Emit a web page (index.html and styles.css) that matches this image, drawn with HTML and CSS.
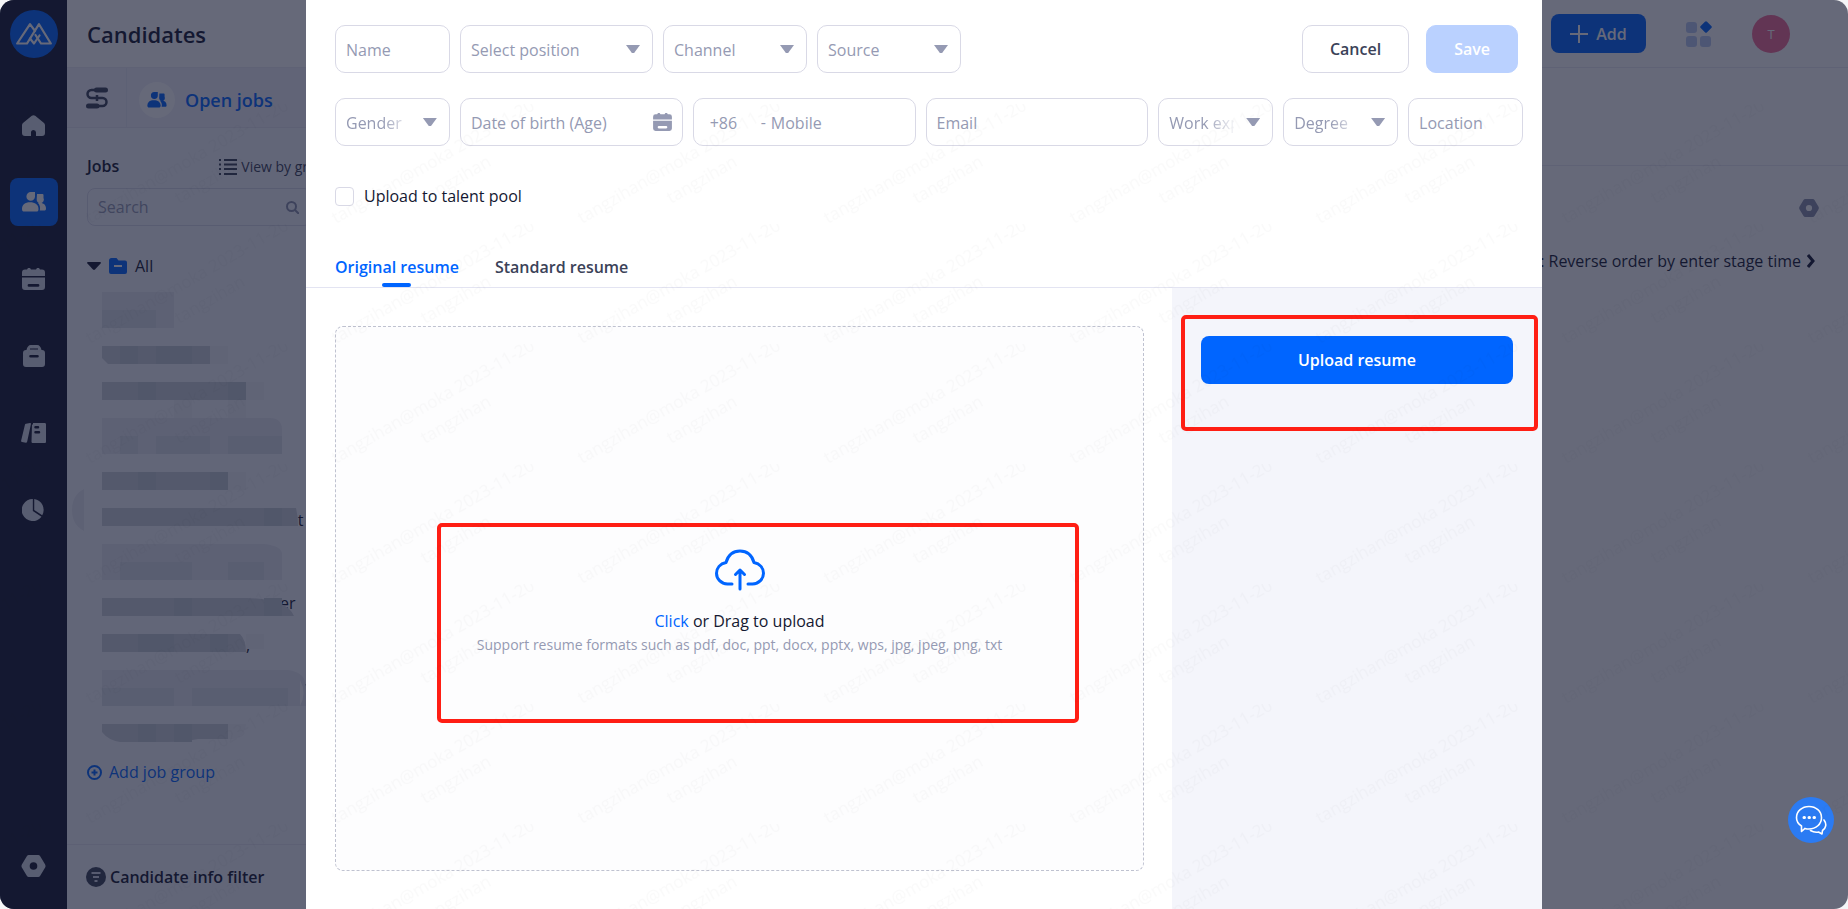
FILE: index.html
```html
<!DOCTYPE html>
<html lang="en">
<head>
    <meta charset="UTF-8">
    <meta name="viewport" content="width=device-width, initial-scale=1.0">
    <title>Candidates - Upload resume</title>
    <link rel="stylesheet" href="styles.css">
</head>
<body>
    <!-- Shared icons -->
    <svg class="sprite" aria-hidden="true">
        <symbol id="icon-people" viewBox="0 0 24 20">
            <path d="M9 0h4v4.500a4.300 4.300 0 1 1-8.600 0A4.500 4.500 0 0 1 9 0z"/>
            <path d="M15 2h5.500a1 1 0 0 1 1 1v3a3.600 3.600 0 1 1-6.800 1.200z"/>
            <path d="M0 17c0-4.500 3-6.800 8-6.800s8.500 2.300 8.500 6.800c0 2-.8 2.500-2 2.500H2c-1.200 0-2-.5-2-2.500z"/>
            <path d="M15.800 10.800c5.400-.6 8.200 1.900 8.200 5.700 0 1.400-.6 2-1.700 2h-4.500c.8-3.200-.1-5.700-2-7.700z"/>
        </symbol>
        <symbol id="icon-calendar" viewBox="0 0 23 22">
            <path d="M3 1.500h2L6 0h2l1 1.500h5L15 0h2l1 1.500h2a3 3 0 0 1 3 3V8H0V4.500a3 3 0 0 1 3-3z"/>
            <path fill-rule="evenodd" d="M0 9.500h23V19a3 3 0 0 1-3 3H3a3 3 0 0 1-3-3zM7 16a1.300 1.300 0 0 0 0 2.800h9a1.300 1.300 0 0 0 0-2.800z"/>
        </symbol>
        <symbol id="icon-nut" viewBox="0 0 24 22">
            <path fill-rule="evenodd" d="M7.500 0h9a2.500 2.500 0 0 1 2.200 1.200l4.800 8a3.500 3.500 0 0 1 0 3.600l-4.800 8a2.500 2.500 0 0 1-2.200 1.200h-9a2.500 2.500 0 0 1-2.200-1.200l-4.800-8a3.500 3.500 0 0 1 0-3.600l4.800-8A2.500 2.500 0 0 1 7.500 0zM12 7.200a3.800 3.800 0 1 0 0 7.600 3.800 3.800 0 0 0 0-7.600z"/>
        </symbol>
    </svg>

    <div class="app">
        <!-- Dark icon rail -->
        <nav class="rail" aria-label="Main">
            <a class="logo" href="#" aria-label="Home page">
                <svg width="36" height="22" viewBox="0 0 36 22" fill="none" stroke="#fff" stroke-width="2.200" stroke-linejoin="round" stroke-linecap="round">
                    <path d="M19 8L14 1.200 1.200 20.500H11L23 1.200 34.800 20.500H25L19.500 12"/>
                    <path d="M14 15.500l4 5 5.500-8"/>
                </svg>
            </a>
            <div class="rail-links">
                <a href="#" aria-label="Dashboard">
                    <svg width="23" height="21" viewBox="0 0 23 21"><path d="M9.800.8a2.800 2.800 0 0 1 3.400 0l8.500 7A3 3 0 0 1 23 10v8a3 3 0 0 1-3 3h-6v-3.500a2.500 2.500 0 0 0-5 0V21H3a3 3 0 0 1-3-3v-8a3 3 0 0 1 1.300-2.200z"/></svg>
                </a>
                <a href="#" class="active" aria-label="Candidates"><svg width="24" height="20"><use href="#icon-people"/></svg></a>
                <a href="#" aria-label="Schedule"><svg width="23" height="22"><use href="#icon-calendar"/></svg></a>
                <a href="#" aria-label="Jobs">
                    <svg width="22" height="22" viewBox="0 0 22 22"><path fill-rule="evenodd" d="M3.500 5C4 2 5.500 0 8 0h6c2.500 0 4 2 4.500 5H19a3 3 0 0 1 3 3v11a3 3 0 0 1-3 3H3a3 3 0 0 1-3-3V8a3 3 0 0 1 3-3zM7 3.500v1h8v-1zM7.500 10a1.200 1.200 0 0 0 0 2.600h7a1.200 1.200 0 0 0 0-2.600z"/></svg>
                </a>
                <a href="#" aria-label="Library">
                    <svg width="25" height="20" viewBox="0 0 25 20"><path d="M5 .8L9 0c.8 0 1 .5.900 1.200L6.200 18.500c-.2.800-.6 1.200-1.300 1.200L1 19c-.8-.2-1-.6-.9-1.300L4 1.600C4.100 1.100 4.400.9 5 .8z"/><path fill-rule="evenodd" d="M11 1.500h1V0h11.500c1 0 1.500.5 1.500 1.500v17c0 1-.5 1.500-1.500 1.500H12c-1 0-1.500-.5-1.500-1.500zM14.500 3a1.200 1.200 0 0 0 0 2.500h2.500a1.200 1.200 0 0 0 0-2.500zm0 5a1.200 1.200 0 0 0 0 2.500h3.500a1.200 1.200 0 0 0 0-2.500z"/></svg>
                </a>
                <a href="#" aria-label="Reports">
                    <svg width="23" height="23" viewBox="0 0 24 24"><path d="M11.300 0v12.500l9 6A11.500 11.500 0 1 1 11.300 0z"/><path d="M12.800 0a11.500 11.500 0 0 1 8.300 17l-8.300-5.400z"/></svg>
                </a>
            </div>
            <a href="#" class="rail-settings" aria-label="Settings"><svg width="25" height="22"><use href="#icon-nut"/></svg></a>
        </nav>

        <div class="page">
            <header class="topbar">
                <h1>Candidates</h1>
                <div class="topbar-actions">
                    <button class="add-btn" type="button">
                        <svg width="18" height="18" viewBox="0 0 18 18" stroke="#fff" stroke-width="2"><path d="M9 0v18M0 9h18"/></svg>
                        Add
                    </button>
                    <button class="icon-btn" type="button" aria-label="Apps">
                        <svg width="26" height="26" viewBox="0 0 26 26"><g fill="#b8c8ef"><rect y="1" width="11" height="11" rx="3"/><rect y="15" width="11" height="11" rx="3"/><rect x="14" y="15" width="11" height="11" rx="3"/></g><rect x="15.500" y="1.500" width="9" height="9" rx="1.500" fill="#0065ff" transform="rotate(45 20 6)"/></svg>
                    </button>
                    <button class="avatar" type="button">T</button>
                </div>
            </header>

            <div class="columns">
                <aside class="sidebar">
                    <div class="scope">
                        <button class="scope-switch" type="button" aria-label="Switch view">
                            <svg width="22" height="22" viewBox="0 0 22 22" fill="none" stroke="#3b4258" stroke-width="2.500"><path d="M12 3H5.500a4 4 0 0 0 0 8h11a4 4 0 0 1 0 8H11"/><path stroke-width="5" stroke-linecap="round" d="M10.500 3h9M2.500 19H11"/><path d="M11 8v6"/></svg>
                        </button>
                        <a class="scope-link" href="#">
                            <span class="scope-icon"><svg width="20" height="16"><use href="#icon-people"/></svg></span>
                            Open jobs
                        </a>
                    </div>
                    <div class="jobs">
                        <div class="jobs-head">
                            <h2>Jobs</h2>
                            <a href="#">
                                <svg width="18" height="16" viewBox="0 0 18 16" stroke="#3b4258" stroke-width="2"><path d="M5 1h13M5 5.500h13M5 10h13M5 15h13M0 1h2M0 5.500h2M0 10h2M0 15h2"/></svg>
                                View by group
                            </a>
                        </div>
                        <div class="search">
                            <input type="text" placeholder="Search" aria-label="Search jobs">
                            <svg width="13" height="13" viewBox="0 0 13 13" fill="none" stroke="#8b91ab" stroke-width="2"><circle cx="5.500" cy="5.500" r="4.500"/><path d="M9 9l4 4"/></svg>
                        </div>
                        <div class="tree-root">
                            <svg width="14" height="8" viewBox="0 0 14 8"><path d="M1 0h12c1 0 1.200.8.600 1.500L8 7.500c-.6.600-1.400.6-2 0L.4 1.500C-.2.800 0 0 1 0z" fill="#141831"/></svg>
                            <svg width="18" height="16" viewBox="0 0 18 16"><path fill="#0065ff" d="M2.500 0h5l2 2.500H16a2 2 0 0 1 2 2V14a2 2 0 0 1-2 2H2a2 2 0 0 1-2-2V2.500A2.500 2.500 0 0 1 2.500 0z"/><path d="M5 8h8" stroke="#fff" stroke-width="2"/></svg>
                            <span>All</span>
                        </div>
                        <!-- Masked job names -->
                        <svg class="masked" width="250" height="460" viewBox="72 285 250 460" aria-hidden="true">
                            <g class="mask-text"><text x="288" y="525">nt</text><text x="280" y="608">er</text><text x="246" y="650">,</text><text x="302" y="692">e</text></g>
                            <path class="m1" d="M102 291h72v36h-72zM102 417h168q12 0 12 12v24H102zM102 543h162q18 2 18 10v26H102zM102 669h186q18 2 18 18v18H102zM84 488v42q-12-6-12-21t12-21z"/>
                            <path class="m2" d="M102 309h54v18h-54zM120 435h18v18h-18zM156 435h54v18h-54zM228 435h54v18h-54zM120 561h72v18h-72zM228 561h36v18h-36zM102 687h72v18h-72zM192 687h96v18h-96z"/>
                            <path class="m1" d="M210 345h18v18h-18zM246 381h18v18h-18zM228 471h18v18h-18zM246 633h18v15h-18zM228 723h18q-2 14-14 15h-4zM174 399h18v18h-18zM228 399h18v18h-18z" opacity=".5"/>
                            <path class="m3" d="M102 345h108v18h-102l-6-6zM102 381h144v18H102zM102 471h126v18H102zM102 507h194q2 8 2 18H102zM102 597h145q40 1 47 18H102zM102 633h138q6 6 6 18H102zM102 723h126v15h-30q-14 3-30 3h-48q-12-2-18-10z"/>
                            <path class="m4" d="M120 345h18v18h-18zM156 345h36v18h-36zM138 381h18v18h-18zM228 381h18v18h-18zM138 471h18v18h-18zM210 471h18v18h-18zM174 597h18v18h-18zM264 597h18v18h-18zM138 633h36v18h-36zM210 633h18v18h-18zM138 723h18v18h-18zM174 723h18v18h-18zM264 507h18v18h-18z"/>
                            <path fill="#fff" d="M300 679q7 13 0 26z"/>
                        </svg>
                        <a class="add-group" href="#">
                            <svg width="15" height="15" viewBox="0 0 15 15" fill="none" stroke="#0065ff" stroke-width="2"><circle cx="7.500" cy="7.500" r="6.500"/><path d="M7.500 4.500v6M4.500 7.500h6"/></svg>
                            Add job group
                        </a>
                    </div>
                    <a class="info-filter" href="#">
                        <svg width="20" height="20" viewBox="0 0 20 20"><circle cx="10" cy="10" r="10" fill="#3b4258"/><path d="M5.500 6h9M7 10h6M8.500 14h3" stroke="#d5d8e4" stroke-width="2"/></svg>
                        Candidate info filter
                    </a>
                </aside>
                <main class="content">
                    <div class="content-head"></div>
                    <div class="content-tools">
                        <button class="icon-btn" type="button" aria-label="List settings"><svg class="list-settings" width="20" height="18"><use href="#icon-nut"/></svg></button>
                        <a class="sort" href="#">Sort: Reverse order by enter stage time
                            <svg width="8" height="14" viewBox="0 0 8 14" fill="none" stroke="#141831" stroke-width="3"><path d="M1 1l5 6-5 6"/></svg>
                        </a>
                    </div>
                </main>
            </div>
        </div>

        <div class="backdrop"></div>

        <!-- Upload drawer -->
        <form class="drawer" onsubmit="return false">
            <div class="drawer-head">
                <div class="head-row">
                    <div class="field name"><input type="text" placeholder="Name" aria-label="Name"></div>
                    <div class="field select position"><select aria-label="Position"><option>Select position</option></select></div>
                    <div class="field select channel"><select aria-label="Channel"><option>Channel</option></select></div>
                    <div class="field select channel"><select aria-label="Source"><option>Source</option></select></div>
                    <div class="head-buttons">
                        <button class="btn" type="button">Cancel</button>
                        <button class="btn btn-save" type="submit" disabled>Save</button>
                    </div>
                </div>
                <div class="info-row">
                    <div class="field select fade"><select aria-label="Gender"><option>Gender</option></select></div>
                    <div class="field">
                        <input type="text" placeholder="Date of birth (Age)" aria-label="Date of birth (Age)">
                        <svg class="date-icon" width="19" height="18"><use href="#icon-calendar"/></svg>
                    </div>
                    <div class="field phone">
                        <input class="code" type="text" placeholder="+86" aria-label="Country code">
                        <span>-</span>
                        <input type="tel" placeholder="Mobile" aria-label="Mobile">
                    </div>
                    <div class="field"><input type="email" placeholder="Email" aria-label="Email"></div>
                    <div class="field select fade"><select aria-label="Work experience"><option>Work experience</option></select></div>
                    <div class="field select fade"><select aria-label="Degree"><option>Degree</option></select></div>
                    <div class="field"><input type="text" placeholder="Location" aria-label="Location"></div>
                </div>
                <label class="pool"><input type="checkbox"> Upload to talent pool</label>
                <div class="tabs">
                    <button class="tab active" type="button">Original resume</button>
                    <button class="tab" type="button">Standard resume</button>
                </div>
            </div>
            <div class="drawer-body">
                <div class="drop-wrap">
                    <div class="dropzone">
                        <svg width="50" height="42" viewBox="0 0 50 42" fill="none" stroke="#0065ff" stroke-width="3" stroke-linecap="round" stroke-linejoin="round">
                            <path d="M17 35h-4.500C6 34.500 1.500 30 1.500 24.300c0-5.200 3.600-9.600 9.500-10.800C13 6.500 18 2 25 2s12 4.500 14 11.500c5.900 1.200 9.500 5.600 9.500 10.800C48.500 30 44 34.500 37.500 35H33"/>
                            <path d="M25 40V21M20.500 25.500L25 21l4.500 4.500"/>
                        </svg>
                        <p class="drop-title"><a href="#">Click</a> or Drag to upload</p>
                        <p class="drop-hint">Support resume formats such as pdf, doc, ppt, docx, pptx, wps, jpg, jpeg, png, txt</p>
                        <span class="mark mark-drop"></span>
                    </div>
                </div>
                <div class="upload-side">
                    <button class="upload-btn" type="button">Upload resume</button>
                    <span class="mark mark-upload"></span>
                </div>
            </div>
        </form>

        <button class="chat" type="button" aria-label="Chat">
            <svg width="32" height="30" viewBox="0 0 32 30" fill="none" stroke="#fff" stroke-width="1.600" stroke-linejoin="round" stroke-linecap="round">
                <path d="M14 1.500c7 0 12.500 4.800 12.500 11.200S21 24 14 24c-1.500 0-2.800-.2-4-.6L6.500 26.500V21C3.300 19 1.500 16 1.500 12.700 1.500 6.300 7 1.500 14 1.500z"/>
                <path d="M29 15c3 4 2 8-1.500 10.500l-.5 3.500-3.500-2c-3 .6-5.500 0-8-1.500"/>
                <path d="M9 12.500h.5M14 12.500h.5M19 12.500h.5" stroke-width="3"/>
            </svg>
        </button>

        <!-- User watermark -->
        <svg class="watermark" aria-hidden="true">
            <defs>
                <pattern id="wm" x="326" y="0" width="246" height="120" patternUnits="userSpaceOnUse">
                    <text transform="translate(10 120) rotate(-30)">tangzihan@moka 2023-11-20</text>
                    <text transform="translate(99 100) rotate(-30)">tangzihan</text>
                </pattern>
            </defs>
            <rect width="100%" height="100%" fill="url(#wm)"/>
        </svg>
    </div>
</body>
</html>
```

FILE: styles.css
```css
* {
    box-sizing: border-box;
    margin: 0;
    padding: 0;
}
body {
    background-color: #f5f6f8;
    color: #141831;
    font-family: "Open Sans", "Noto Sans", sans-serif;
    font-size: 16px;
    line-height: 24px;
}
a {
    color: inherit;
    text-decoration: none;
}
button, input, select {
    font: inherit;
    color: inherit;
}
button {
    border: none;
    background: none;
    cursor: pointer;
}
svg {
    flex: none;
}
.sprite {
    display: none;
}
.app {
    display: flex;
    position: relative;
    height: 100vh;
    overflow: hidden;
    border-radius: 14px;
    background-color: #fff;
}

/* Icon rail */
.rail {
    display: flex;
    flex-direction: column;
    align-items: center;
    width: 67px;
    padding: 10px 0 19px;
    background-color: #141831;
    fill: #d8dce8;
}
.rail a {
    display: flex;
    align-items: center;
    justify-content: center;
    width: 48px;
    height: 48px;
    border-radius: 8px;
}
.rail .logo {
    border-radius: 50%;
    background-color: #0065ff;
}
.rail-links {
    display: flex;
    flex-direction: column;
    flex: 1;
    gap: 29px;
    margin-top: 43px;
}
.rail .active {
    background-color: #0065ff;
    fill: #fff;
}

/* Page behind the drawer */
.page {
    display: flex;
    flex-direction: column;
    flex: 1;
    min-width: 0;
}
.topbar {
    display: flex;
    align-items: center;
    justify-content: space-between;
    height: 68px;
    padding: 0 58px 0 20px;
    border-bottom: 1px solid #eaebf2;
}
.topbar h1 {
    font-size: 22px;
    font-weight: 600;
}
.topbar-actions {
    display: flex;
    align-items: center;
    gap: 40px;
}
.add-btn {
    display: flex;
    align-items: center;
    justify-content: center;
    gap: 8px;
    width: 95px;
    height: 39px;
    border-radius: 8px;
    background-color: #0065ff;
    color: #fff;
    font-weight: 600;
}
.icon-btn {
    display: flex;
}
.avatar {
    width: 38px;
    height: 38px;
    border-radius: 50%;
    background-color: #f46a96;
    color: #fff;
    font-size: 13px;
}
.columns {
    display: flex;
    flex: 1;
}
.sidebar {
    display: flex;
    flex-direction: column;
    width: 265px;
    background-color: #f4f6fd;
}
.scope {
    display: flex;
    height: 60px;
    background-color: #efeffa;
    border-bottom: 1px solid #e4e6f0;
}
.scope-switch {
    width: 60px;
    border-right: 1px solid #e6e7f2;
    line-height: 0;
}
.scope-link {
    display: flex;
    align-items: center;
    gap: 10px;
    padding: 4px 0 0 12px;
    color: #0065ff;
    font-size: 18px;
    font-weight: 600;
}
.scope-icon {
    display: flex;
    align-items: center;
    justify-content: center;
    width: 36px;
    height: 36px;
    border-radius: 50%;
    background-color: #fff;
    fill: #0065ff;
}
.jobs {
    flex: 1;
    padding: 24px 20px 0;
}
.jobs-head {
    display: flex;
    align-items: center;
    gap: 100px;
    white-space: nowrap;
}
.jobs-head h2 {
    font-size: 16px;
    font-weight: 600;
}
.jobs-head a {
    display: flex;
    align-items: center;
    gap: 4px;
    padding-top: 3px;
    color: #3b4258;
    font-size: 14px;
}
.search {
    display: flex;
    align-items: center;
    height: 38px;
    margin-top: 9px;
    padding: 0 12px 0 10px;
    border: 1px solid #d8dae8;
    border-radius: 8px;
}
.search input {
    flex: 1;
    min-width: 0;
    border: none;
    outline: none;
    background: none;
}
input::placeholder {
    color: #959ab3;
    opacity: 1;
}
.tree-root {
    display: flex;
    align-items: center;
    gap: 8px;
    margin-top: 28px;
}
.masked {
    display: block;
    margin: 8px 0 0 -15px;
}
.m1 { fill: #e5e8f0; }
.m2 { fill: #dadee8; }
.m3 { fill: #cbd0da; }
.m4 { fill: #c4cad5; }
.mask-text {
    fill: #141831;
    font-size: 16px;
}
.add-group {
    display: flex;
    align-items: center;
    gap: 7px;
    margin-top: 14px;
    color: #0065ff;
}
.info-filter {
    display: flex;
    align-items: center;
    gap: 4px;
    height: 65px;
    padding-left: 19px;
    border-top: 1px solid #e4e6f0;
    font-weight: 600;
}
.content {
    flex: 1;
}
.content-head {
    height: 98px;
    border-bottom: 1px solid #eaebf2;
}
.content-tools {
    display: flex;
    flex-direction: column;
    align-items: flex-end;
    gap: 32px;
    padding: 33px 29px 0;
}
.list-settings {
    fill: #8b91ab;
}
.sort {
    display: flex;
    align-items: center;
    gap: 6px;
    padding-right: 4px;
}
.backdrop {
    position: absolute;
    inset: 0;
    background-color: rgba(20, 24, 49, 0.65);
}

/* Drawer */
.drawer {
    display: flex;
    flex-direction: column;
    position: absolute;
    top: 0;
    bottom: 0;
    left: 306px;
    right: 306px;
    background-color: #fff;
}
.drawer-head {
    padding: 25px 19px 0 29px;
    border-bottom: 1px solid #e3e4f2;
}
.head-row {
    display: flex;
    gap: 10px;
    margin-bottom: 25px;
}
.info-row {
    display: grid;
    grid-template-columns: 115fr 223fr 223fr 223fr 115fr 115fr 115fr;
    gap: 10px;
}
.field {
    display: flex;
    align-items: center;
    position: relative;
    min-width: 0;
    height: 48px;
    border: 1px solid #d9d9e6;
    border-radius: 10px;
    color: #959ab3;
}
.field input, .field select {
    flex: 1;
    width: 100%;
    min-width: 0;
    height: 100%;
    padding: 2px 10px 0;
    border: none;
    outline: none;
    background: none;
    appearance: none;
}
.name {
    width: 115px;
}
.position {
    width: 193px;
}
.channel {
    width: 144px;
}
.select::after {
    content: "";
    position: absolute;
    right: 12px;
    width: 14px;
    height: 8px;
    background-color: #959ab3;
    clip-path: polygon(0 0, 100% 0, 58% 100%, 42% 100%);
    pointer-events: none;
}
.field.select select {
    padding-right: 38px;
}
/* Long values fade out before the arrow */
.fade select {
    mask-image: linear-gradient(to right, #000 46px, transparent 78px);
}
.date-icon {
    margin-right: 10px;
    fill: #959ab3;
}
.phone input {
    padding: 2px 5px 0;
}
.phone .code {
    flex: none;
    width: 67px;
    padding: 2px 0 0 16px;
}
.head-buttons {
    display: flex;
    gap: 17px;
    margin-left: auto;
    padding-right: 5px;
}
.btn {
    height: 48px;
    padding: 0 27px;
    border: 1px solid #d9d9e6;
    border-radius: 10px;
    color: #3b4258;
    font-weight: 600;
}
.btn-save {
    border-color: #bad1ff;
    background-color: #bad1ff;
    color: #fff;
}
.pool {
    display: flex;
    align-items: center;
    gap: 10px;
    width: max-content;
    margin-top: 38px;
}
.pool input {
    width: 19px;
    height: 19px;
    border: 1px solid #d9d9e6;
    border-radius: 4px;
    appearance: none;
}
.tabs {
    display: flex;
    gap: 36px;
    margin-top: 36px;
}
.tab {
    display: flex;
    flex-direction: column;
    align-items: center;
    gap: 4px;
    height: 43px;
    padding-top: 11px;
    color: #3b4258;
    font-weight: 600;
}
.tab.active {
    color: #0065ff;
}
.tab.active::after {
    content: "";
    width: 29px;
    height: 4px;
    border-radius: 2px;
    background-color: #0065ff;
}
.drawer-body {
    display: flex;
    flex: 1;
}
.drop-wrap {
    display: flex;
    flex: 1;
    padding: 38px 28px 38px 29px;
}
.dropzone {
    display: flex;
    flex-direction: column;
    align-items: center;
    justify-content: center;
    position: relative;
    flex: 1;
    padding-top: 8px;
    border: 1px dashed #bfc2d0;
    border-radius: 8px;
    background-color: #fdfdfe;
}
.drop-title {
    margin-top: 18px;
}
.drop-title a {
    color: #0065ff;
}
.drop-hint {
    color: #959ab3;
    font-size: 14px;
}
.upload-side {
    position: relative;
    width: 370px;
    padding: 48px 29px;
    background-color: #f4f5fb;
}
.upload-btn {
    width: 100%;
    height: 48px;
    border-radius: 8px;
    background-color: #0065ff;
    color: #fff;
    font-weight: 600;
}

/* Red annotation frames */
.mark {
    position: absolute;
    border: 4px solid #ff1e14;
    border-radius: 5px;
    pointer-events: none;
}
.mark-drop {
    top: 196px;
    left: 101px;
    right: 64px;
    height: 200px;
}
.mark-upload {
    top: 27px;
    left: 9px;
    right: 4px;
    height: 116px;
}
.chat {
    display: flex;
    align-items: center;
    justify-content: center;
    position: absolute;
    right: 14px;
    bottom: 66px;
    width: 46px;
    height: 46px;
    border-radius: 50%;
    background-color: #2b7bf3;
}
.watermark {
    position: absolute;
    top: 104px;
    left: 0;
    width: 100%;
    height: 100%;
    pointer-events: none;
}
.watermark text {
    font-size: 17px;
    fill: #000;
    fill-opacity: 0.02;
}
```
